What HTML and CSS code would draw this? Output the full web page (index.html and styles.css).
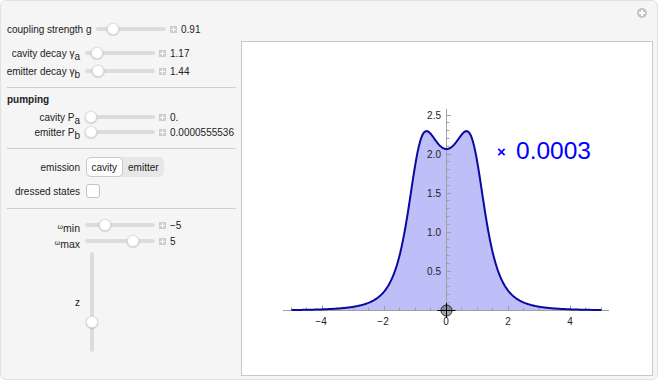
FILE: index.html
```html
<!DOCTYPE html>
<html>
<head>
<meta charset="utf-8">
<title>Cavity QED spectrum</title>
<link rel="stylesheet" href="styles.css">
</head>
<body>
<div class="panel">
  <span class="corner-btn"></span>

  <div class="row row-top">
    <span class="lbl-free">coupling strength g</span>
    <span class="track"><span class="thumb" style="left:17px"></span></span>
    <span class="plus"></span>
    <span class="val">0.91</span>
  </div>

  <div class="body">
    <div class="controls">
      <div class="row r-decay1">
        <span class="lbl">cavity decay γ<sub>a</sub></span>
        <span class="track"><span class="thumb" style="left:12px"></span></span>
        <span class="plus"></span>
        <span class="val">1.17</span>
      </div>
      <div class="row r-decay2">
        <span class="lbl">emitter decay γ<sub>b</sub></span>
        <span class="track"><span class="thumb" style="left:13px"></span></span>
        <span class="plus"></span>
        <span class="val">1.44</span>
      </div>

      <div class="sep"></div>

      <div class="section-title">pumping</div>
      <div class="row r-pump1">
        <span class="lbl">cavity P<sub>a</sub></span>
        <span class="track"><span class="thumb" style="left:6px"></span></span>
        <span class="plus"></span>
        <span class="val">0.</span>
      </div>
      <div class="row r-pump2">
        <span class="lbl">emitter P<sub>b</sub></span>
        <span class="track"><span class="thumb" style="left:6px"></span></span>
        <span class="plus"></span>
        <span class="val">0.0000555536</span>
      </div>

      <div class="sep"></div>

      <div class="row r-emission">
        <span class="lbl">emission</span>
        <span class="seg">
          <span class="seg-btn is-on">cavity</span>
          <span class="seg-btn">emitter</span>
        </span>
      </div>
      <div class="row r-dressed">
        <span class="lbl">dressed states</span>
        <span class="check"></span>
      </div>

      <div class="sep sep-3"></div>

      <div class="row r-wmin">
        <span class="lbl"><span class="om">ω</span><sub class="big">min</sub></span>
        <span class="track"><span class="thumb" style="left:20px"></span></span>
        <span class="plus"></span>
        <span class="val">−5</span>
      </div>
      <div class="row r-wmax">
        <span class="lbl"><span class="om">ω</span><sub class="big">max</sub></span>
        <span class="track"><span class="thumb" style="left:48px"></span></span>
        <span class="plus"></span>
        <span class="val">5</span>
      </div>

      <div class="vrow">
        <span class="lbl">z</span>
        <span class="vtrack"><span class="vthumb" style="top:70px"></span></span>
      </div>
    </div>

    <div class="plot">
      <svg class="chart" width="410" height="333" viewBox="0 0 410 333">
        <path id="fill" class="fill" d=""></path>
        <path class="axis" d="M41 268.5H367M204.5 67V268"></path>
        <path class="tick" d="M80.5 268v-4.5M142.5 268v-4.5M204.5 268v-4.5M266.5 268v-4.5M328.5 268v-4.5"></path>
        <path class="tick" d="M49.5 268v-2.5M64.5 268v-2.5M95.5 268v-2.5M111.5 268v-2.5M126.5 268v-2.5M157.5 268v-2.5M173.5 268v-2.5M188.5 268v-2.5M219.5 268v-2.5M235.5 268v-2.5M250.5 268v-2.5M281.5 268v-2.5M297.5 268v-2.5M312.5 268v-2.5M343.5 268v-2.5M359.5 268v-2.5"></path>
        <path class="tick" d="M205 229.5h4M205 190.5h4M205 151.5h4M205 112.5h4M205 73.5h4"></path>
        <path class="tick" d="M205 260.5h2.5M205 252.5h2.5M205 244.5h2.5M205 236.5h2.5M205 221.5h2.5M205 213.5h2.5M205 205.5h2.5M205 197.5h2.5M205 182.5h2.5M205 174.5h2.5M205 166.5h2.5M205 158.5h2.5M205 143.5h2.5M205 135.5h2.5M205 127.5h2.5M205 119.5h2.5M205 104.5h2.5M205 96.5h2.5M205 88.5h2.5M205 80.5h2.5"></path>
        <path id="curve" class="curve" d=""></path>
        <g class="xlab">
          <text x="79" y="283">−4</text>
          <text x="141" y="283">−2</text>
          <text x="204" y="283">0</text>
          <text x="266" y="283">2</text>
          <text x="328" y="283">4</text>
        </g>
        <g class="ylab">
          <text x="199" y="233">0.5</text>
          <text x="199" y="194">1.0</text>
          <text x="199" y="155">1.5</text>
          <text x="199" y="116">2.0</text>
          <text x="199" y="77">2.5</text>
        </g>
        <text class="times" x="259.5" y="115">×</text>
        <text class="factor" x="274" y="117">0.0003</text>
        <g class="locator">
          <circle cx="204.5" cy="268.5" r="5.5"></circle>
          <path d="M195.5 268.5h18M204.5 261v15"></path>
        </g>
      </svg>
    </div>
  </div>
</div>
<script src="script.js"></script>
</body>
</html>
```

FILE: styles.css
```css
* { box-sizing: border-box; }

html, body {
  margin: 0;
  padding: 0;
  background: #ffffff;
}

body {
  font-family: "Liberation Sans", Arial, sans-serif;
  font-size: 10px;
  color: #222222;
}

.panel {
  position: relative;
  width: 658px;
  height: 380px;
  background: #f5f5f5;
  border: 1px solid #e1e1e1;
  border-radius: 6px;
  padding-top: 21px;
}

.corner-btn {
  position: absolute;
  top: 7px;
  right: 10px;
  width: 10px;
  height: 10px;
  border-radius: 50%;
  background:
    linear-gradient(#fff, #fff) center / 6px 2px no-repeat,
    linear-gradient(#fff, #fff) center / 2px 6px no-repeat,
    #c4c4c4;
}

.row {
  display: flex;
  align-items: center;
  height: 14px;
  white-space: nowrap;
}

.row-top { padding-left: 6px; }

.lbl-free { margin-right: 4.5px; }

.lbl {
  width: 79px;
  flex: none;
  text-align: right;
}

sub {
  font-size: 10px;
  vertical-align: baseline;
  position: relative;
  top: 3px;
  line-height: 0;
}

.om { font-size: 7px; }
sub.big { font-size: 10.5px; top: 3px; }

.track {
  position: relative;
  flex: none;
  width: 70px;
  height: 4px;
  margin-left: 5px;
  border-radius: 2px;
  background: #dcdcdc;
}

.row-top .track { margin-left: 0; }

.thumb, .vthumb {
  position: absolute;
  width: 12px;
  height: 12px;
  border-radius: 50%;
  background: #ffffff;
  border: 1px solid rgba(0, 0, 0, 0.10);
  box-shadow: 0 0.5px 1.5px rgba(0, 0, 0, 0.30);
}

.thumb { top: 50%; margin: -6px 0 0 -6px; }
.vthumb { left: 50%; margin: -6px 0 0 -6px; }

.plus {
  flex: none;
  width: 7px;
  height: 7px;
  margin-left: 4px;
  background:
    linear-gradient(#fff, #fff) center / 5px 1px no-repeat,
    linear-gradient(#fff, #fff) center / 1px 5px no-repeat,
    #cdcdcd;
}

.val { margin-left: 4px; }

.body {
  display: flex;
  margin-top: 5px;
}

.controls {
  width: 240px;
  flex: none;
}

.r-decay1 { margin-top: 5px; }
.r-decay2 { margin-top: 4px; }

.sep {
  height: 1px;
  margin: 9px 5px 0 6px;
  background: #cfcfcf;
}

.sep-3 { margin-top: 10px; }

.section-title {
  margin-top: 5px;
  padding-left: 6px;
  line-height: 14px;
  font-weight: bold;
}

.r-pump1 { margin-top: 3px; }
.r-pump2 { margin-top: 1px; }

.r-emission { margin-top: 8px; height: 20px; }

.seg {
  display: flex;
  margin-left: 6px;
  height: 20px;
  border-radius: 5px;
  background: #e7e7e7;
}

.seg-btn {
  display: flex;
  align-items: center;
  padding: 0 5.5px;
  border-radius: 5px;
  color: #222;
}

.seg-btn.is-on {
  padding: 0 4.5px;
  background: #ffffff;
  border: 1px solid #c9c9c9;
}

.r-dressed { margin-top: 7px; }

.check {
  width: 14px;
  height: 14px;
  margin-left: 6px;
  border-radius: 3px;
  background: #ffffff;
  border: 1px solid #c2c2c2;
}

.r-wmin { margin-top: 9px; }
.r-wmax { margin-top: 2px; }

.vrow {
  display: flex;
  align-items: center;
  height: 100px;
  margin-top: 4px;
}

.vtrack {
  position: relative;
  width: 4px;
  height: 100px;
  margin-left: 10px;
  border-radius: 2px;
  background: #dcdcdc;
}

.plot {
  width: 412px;
  height: 335px;
  flex: none;
  background: #ffffff;
  border: 1px solid #c8c8c8;
}

.chart { display: block; }

.fill { fill: #bebef9; stroke: none; }
.axis { stroke: #a0a0a0; stroke-width: 1; fill: none; }
.tick { stroke: #a0a0a0; stroke-width: 1; fill: none; }
.curve { stroke: #0a0a9e; stroke-width: 2; fill: none; stroke-linejoin: round; }

.chart text {
  font-family: "Liberation Sans", Arial, sans-serif;
  font-size: 10px;
  fill: #222222;
}

.xlab text { text-anchor: middle; }
.ylab text { text-anchor: end; }

.chart .times {
  font-size: 15px;
  font-weight: bold;
  fill: #0000ff;
  text-anchor: middle;
}

.chart .factor {
  font-size: 24.5px;
  fill: #0000ff;
}

.locator circle {
  fill: rgba(90, 90, 90, 0.55);
  stroke: #222222;
  stroke-width: 1;
}

.locator path {
  stroke: #000000;
  stroke-width: 1;
}
```

FILE: script.js
```js
(function () {
  var X0 = 204.5, Y0 = 268.5, SX = 31, SY = 78;

  function spectrum(w) {
    var u = w * w;
    var a = 1.316 - u;
    return 3.585 / (a * a + 1.8 * u);
  }

  var d = '';
  var n = 500;
  for (var i = 0; i <= n; i++) {
    var w = -5 + (10 * i) / n;
    var x = (X0 + SX * w).toFixed(2);
    var y = (Y0 - SY * spectrum(w)).toFixed(2);
    d += (i ? 'L' : 'M') + x + ' ' + y;
  }

  document.getElementById('curve').setAttribute('d', d);
  document.getElementById('fill').setAttribute(
    'd',
    d + 'L' + (X0 + 5 * SX) + ' ' + Y0 + 'L' + (X0 - 5 * SX) + ' ' + Y0 + 'Z'
  );
})();
```
